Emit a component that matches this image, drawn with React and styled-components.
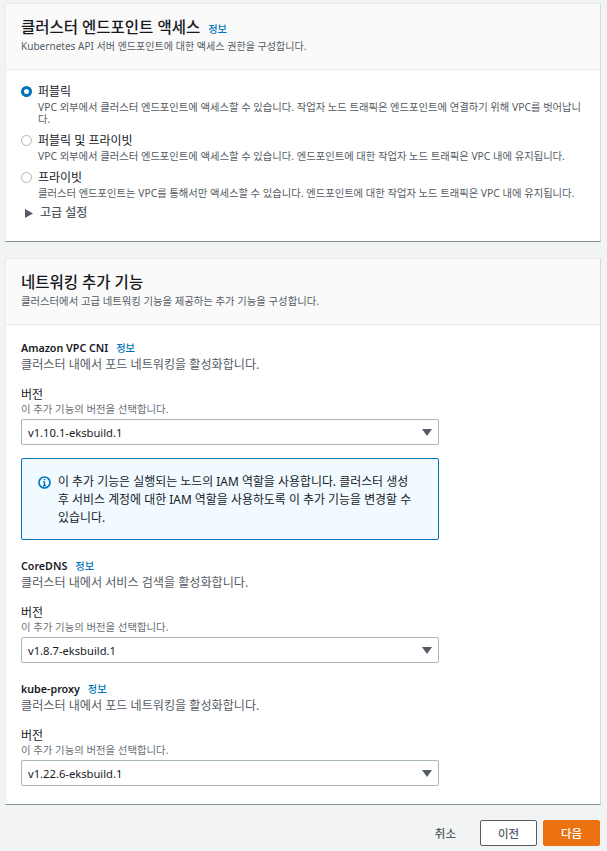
import React from "react";
import styled, { createGlobalStyle } from "styled-components";

const Global = createGlobalStyle`
  html, body { margin: 0; padding: 0; background: #f2f3f3; }
  body { font-family: "Noto Sans", "Noto Sans CJK KR", sans-serif; color: #16191f; width: 607px; height: 851px; overflow: hidden; }
  * { box-sizing: border-box; }
`;

const Page = styled.div`
  display: flex;
  flex-direction: column;
  gap: 16px;
  padding: 3px 6px 0 5px;
`;
const Panel = styled.section`
  background: #fff;
  border-top: 1px solid #eaeded;
  border-left: 1px solid #eaeded;
  border-right: 1px solid #d5dbdb;
  border-bottom: 1px solid #879596;
  height: ${p => p.$h}px;
`;
const PanelHeader = styled.header`
  background: #fafafa;
  border-bottom: 1px solid #eaeded;
  height: ${p => p.$h}px;
  padding: ${p => p.$pt}px 15px 0;
`;
const TitleRow = styled.div`
  display: flex;
  align-items: baseline;
  gap: 8px;
  height: 24px;
  line-height: 24px;
`;
const Title = styled.h2`
  margin: 0;
  font-size: 15.5px;
  font-weight: 500;
`;
const Info = styled.a`
  color: #0073bb;
  font-size: 10.2px;
  font-weight: 500;
`;
const Sub = styled.p`
  margin: 0;
  font-size: ${p => p.$size}px;
  line-height: 14px;
  color: #545b64;
`;
const OptionList = styled.div`
  padding: 14px 15px 0;
  display: flex;
  flex-direction: column;
`;
const Option = styled.div`
  display: flex;
  gap: 6px;
  margin-bottom: ${p => p.$mb}px;
`;
const Radio = styled.span`
  flex: none;
  width: 11px;
  height: 11px;
  margin-top: 2px;
  border-radius: 50%;
  background: #fff;
  border: ${p => (p.$on ? "3.5px solid #0073bb" : "1px solid #aab7b8")};
`;
const OptionBody = styled.div`
  flex: 1;
  min-width: 0;
`;
const OptionLabel = styled.div`
  font-size: 12px;
  line-height: 15px;
  color: #16191f;
`;
const OptionDesc = styled.div`
  font-size: 10.32px;
  line-height: 12px;
  margin-top: 2px;
  color: #545b64;
`;
const Advanced = styled.div`
  display: flex;
  align-items: center;
  gap: 7px;
  padding-left: 4px;
  font-size: 12px;
  line-height: 16px;
  color: #545b64;
  font-weight: 500;
`;
const Caret = styled.svg`
  width: 8px;
  height: 9px;
  fill: #545b64;
`;
const Body = styled.div`
  padding: 0 15px;
`;
const Addon = styled.div`
  padding-top: ${p => p.$pt}px;
`;
const AddonName = styled.div`
  display: flex;
  align-items: baseline;
  gap: 8px;
  font-size: 10.7px;
  font-weight: 600;
  line-height: 16px;
`;
const AddonDesc = styled.div`
  font-size: 12.1px;
  line-height: 18px;
  color: #545b64;
`;
const FieldLabel = styled.div`
  font-size: 12px;
  line-height: 15px;
  margin-top: 13px;
`;
const FieldHint = styled.div`
  font-size: 10.4px;
  line-height: 14px;
  color: #687078;
  margin-bottom: 3px;
`;
const Select = styled.div`
  width: 418px;
  height: 26px;
  border: 1px solid #aab7b8;
  border-radius: 2px;
  background: #fff;
  display: flex;
  align-items: center;
  justify-content: space-between;
  padding: 0 6px;
  font-size: 11.2px;
  color: #16191f;
`;
const Arrow = styled.svg`
  width: 10px;
  height: 7px;
  fill: #545b64;
`;
const Alert = styled.div`
  width: 418px;
  height: 82px;
  margin-top: 13px;
  border: 1px solid #0073bb;
  border-radius: 2px;
  background: #f1faff;
  display: flex;
  gap: 7px;
  padding: 14px 24px 14px 16px;
`;
const AlertIcon = styled.svg`
  flex: none;
  width: 13px;
  height: 13px;
  margin-top: 3px;
`;
const AlertText = styled.div`
  font-size: 11.95px;
  line-height: 18px;
  color: #16191f;
`;
const Footer = styled.footer`
  display: flex;
  justify-content: flex-end;
  align-items: center;
  margin-top: -1px;
  height: 26px;
  margin-right: 1px;
`;
const Cancel = styled.span`
  font-size: 11.5px;
  font-weight: 500;
  color: #545b64;
  margin-right: 24px;
`;
const Button = styled.button`
  font-family: inherit;
  width: 57px;
  height: 26px;
  padding: 0;
  margin-left: ${p => p.$ml || 0}px;
  font-size: 11.5px;
  font-weight: 500;
  border-radius: 2px;
  border: 1px solid ${p => (p.$primary ? "#ec7211" : "#545b64")};
  background: ${p => (p.$primary ? "#ec7211" : "#fff")};
  color: ${p => (p.$primary ? "#fff" : "#545b64")};
`;

const options = [
  { on: true, label: "퍼블릭", mb: 8, desc: "VPC 외부에서 클러스터 엔드포인트에 액세스할 수 있습니다. 작업자 노드 트래픽은 엔드포인트에 연결하기 위해 VPC를 벗어납니다." },
  { label: "퍼블릭 및 프라이빗", mb: 8, desc: "VPC 외부에서 클러스터 엔드포인트에 액세스할 수 있습니다. 엔드포인트에 대한 작업자 노드 트래픽은 VPC 내에 유지됩니다." },
  { label: "프라이빗", mb: 6, desc: "클러스터 엔드포인트는 VPC를 통해서만 액세스할 수 있습니다. 엔드포인트에 대한 작업자 노드 트래픽은 VPC 내에 유지됩니다." },
];

const VersionField = ({ version }) => (
  <>
    <FieldLabel>버전</FieldLabel>
    <FieldHint>이 추가 기능의 버전을 선택합니다.</FieldHint>
    <Select>
      {version}
      <Arrow viewBox="0 0 10 7"><path d="M0 0h10L5 7z" /></Arrow>
    </Select>
  </>
);

export default function App() {
  return (
    <Page>
      <Global />
      <Panel $h={239}>
        <PanelHeader $h={66} $pt={11}>
          <TitleRow>
            <Title>클러스터 엔드포인트 액세스</Title>
            <Info>정보</Info>
          </TitleRow>
          <Sub $size={10.05}>Kubernetes API 서버 엔드포인트에 대한 액세스 권한을 구성합니다.</Sub>
        </PanelHeader>
        <OptionList>
          {options.map(o => (
            <Option key={o.label} $mb={o.mb}>
              <Radio $on={o.on} />
              <OptionBody>
                <OptionLabel>{o.label}</OptionLabel>
                <OptionDesc>{o.desc}</OptionDesc>
              </OptionBody>
            </Option>
          ))}
          <Advanced>
            <Caret viewBox="0 0 8 9"><path d="M0 0l8 4.5L0 9z" /></Caret>
            고급 설정
          </Advanced>
        </OptionList>
      </Panel>
      <Panel $h={547}>
        <PanelHeader $h={66} $pt={11}>
          <TitleRow>
            <Title>네트워킹 추가 기능</Title>
          </TitleRow>
          <Sub $size={10.37}>클러스터에서 고급 네트워킹 기능을 제공하는 추가 기능을 구성합니다.</Sub>
        </PanelHeader>
        <Body>
          <Addon $pt={15}>
            <AddonName>Amazon VPC CNI <Info>정보</Info></AddonName>
            <AddonDesc>클러스터 내에서 포드 네트워킹을 활성화합니다.</AddonDesc>
            <VersionField version="v1.10.1-eksbuild.1" />
          </Addon>
          <Alert>
            <AlertIcon viewBox="0 0 16 16" fill="none" stroke="#0073bb" strokeWidth="2">
              <circle cx="8" cy="8" r="6.8" />
              <path d="M8 7v5M6.3 12h3.4M6.5 7H8" strokeWidth="1.8" />
              <circle cx="8" cy="4.4" r="1" fill="#0073bb" stroke="none" />
            </AlertIcon>
            <AlertText>이 추가 기능은 실행되는 노드의 IAM 역할을 사용합니다. 클러스터 생성 후 서비스 계정에 대한 IAM 역할을 사용하도록 이 추가 기능을 변경할 수 있습니다.</AlertText>
          </Alert>
          <Addon $pt={18}>
            <AddonName>CoreDNS <Info>정보</Info></AddonName>
            <AddonDesc>클러스터 내에서 서비스 검색을 활성화합니다.</AddonDesc>
            <VersionField version="v1.8.7-eksbuild.1" />
          </Addon>
          <Addon $pt={18}>
            <AddonName>kube-proxy <Info>정보</Info></AddonName>
            <AddonDesc>클러스터 내에서 포드 네트워킹을 활성화합니다.</AddonDesc>
            <VersionField version="v1.22.6-eksbuild.1" />
          </Addon>
        </Body>
      </Panel>
      <Footer>
        <Cancel>취소</Cancel>
        <Button>이전</Button>
        <Button $primary $ml={6}>다음</Button>
      </Footer>
    </Page>
  );
}
